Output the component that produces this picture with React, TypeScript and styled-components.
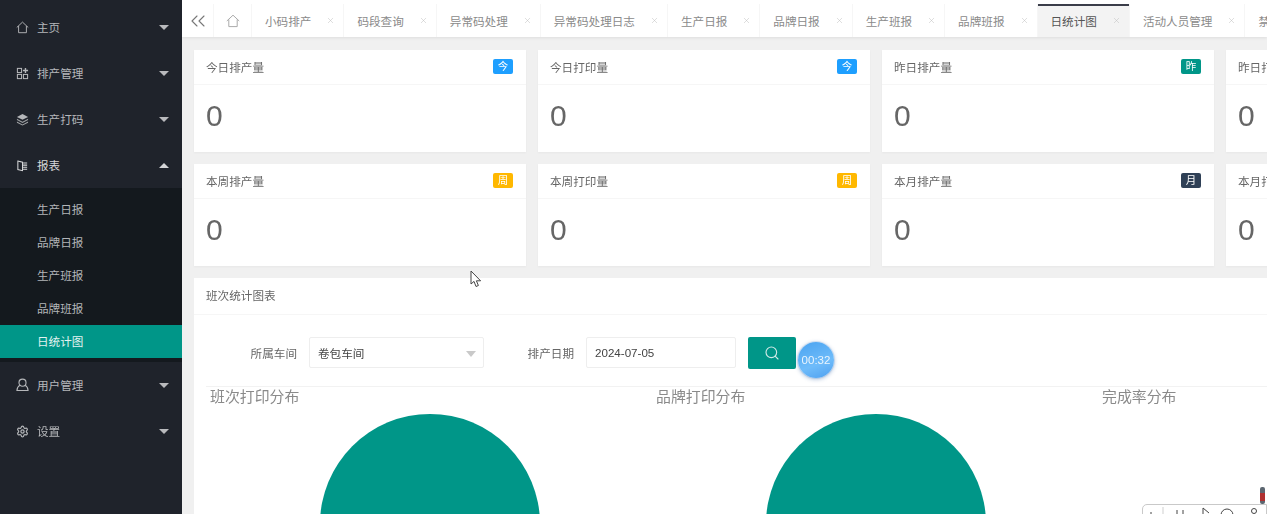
import React from "react";
import styled, { createGlobalStyle } from "styled-components";
import { ChevronsLeft, Settings, X, Search } from "lucide-react";

const Global = createGlobalStyle`
  html, body { margin: 0; padding: 0; height: 100%; overflow: hidden; background: #f0f0f0; }
  #root { height: 100%; }
  * { box-sizing: border-box; }
  body { font-family: "Liberation Sans", "Noto Sans CJK SC", sans-serif; font-size: 11.6px; color: #555; }
`;

const Shell = styled.div`
  position: relative; display: flex; width: 1267px; height: 514px; overflow: hidden;
  filter: blur(0.35px);
`;
const Sidebar = styled.nav`
  flex: 0 0 182px; background: #1f232b; padding-top: 4px; color: #b5b7ba;
  display: flex; flex-direction: column;
`;
const MenuRow = styled.div<{ $open?: boolean }>`
  height: 46px; display: flex; align-items: center; padding: 0 13px 0 16px; gap: 8px;
  color: ${p => (p.$open ? "#d6d7d9" : "#b5b7ba")};
  svg { flex: none; }
  span { flex: 1; }
`;
const Caret = styled.i<{ $up?: boolean }>`
  width: 0; height: 0; border-left: 5.5px solid transparent; border-right: 5.5px solid transparent;
  ${p => (p.$up ? "border-bottom: 5.5px solid #d4d5d7;" : "border-top: 5.5px solid #b9babd;")}
`;
const SubMenu = styled.div`
  background: #14191e; padding: 5px 0 4px; display: flex; flex-direction: column;
`;
const SubItem = styled.div<{ $active?: boolean }>`
  height: 33px; line-height: 33px; padding-left: 37px;
  background: ${p => (p.$active ? "#009688" : "transparent")};
  color: ${p => (p.$active ? "#e3f3f1" : "#b2b5b8")};
`;
const Main = styled.main`
  flex: 1; min-width: 0; display: flex; flex-direction: column; overflow: hidden;
`;
const TabBar = styled.header`
  flex: 0 0 37px; display: flex; background: #fff; padding-top: 4px;
  box-shadow: 0 1px 3px rgba(0,0,0,.08); position: relative;
  white-space: nowrap; color: #888;
`;
const TabIcon = styled.div<{ $w: number; $c: string }>`
  flex: 0 0 ${p => p.$w}px; display: flex; align-items: center; justify-content: center;
  border-right: 1px solid #f6f6f6; color: ${p => p.$c};
`;
const Tab = styled.div<{ $active?: boolean }>`
  flex: none; display: flex; align-items: center; padding: 0 8px 0 13px; gap: 15px;
  border-right: 1px solid #f6f6f6;
  background: ${p => (p.$active ? "#f3f3f3" : "#fff")};
  color: ${p => (p.$active ? "#555" : "#8a8a8a")};
  box-shadow: ${p => (p.$active ? "inset 0 2px 0 #3a3d49" : "none")};
  svg { color: #bdbdbd; flex: none; }
`;
const Content = styled.div`
  flex: 1; padding: 13px 0 0 12px; display: flex; flex-direction: column; gap: 12px; min-height: 0;
`;
const CardGrid = styled.div`
  display: grid; grid-template-columns: repeat(4, 332px); grid-auto-rows: 102px; gap: 12px;
`;
const Card = styled.section`
  background: #fff; box-shadow: 0 1px 2px rgba(0,0,0,.04); display: flex; flex-direction: column;
`;
const CardHead = styled.div`
  height: 35px; display: flex; align-items: center; justify-content: space-between;
  padding: 0 13px 1px 12px; border-bottom: 1px solid #f6f6f6; color: #666;
`;
const Badge = styled.span<{ $c: string }>`
  width: 20px; height: 15px; border-radius: 2px; background: ${p => p.$c}; color: #fff;
  font-size: 10.5px; line-height: 15px; text-align: center;
`;
const Value = styled.div`
  padding: 13px 12px 0; font-size: 30px; line-height: 36px; color: #666;
`;
const Panel = styled.section`
  flex: 1; background: #fff; min-height: 0; width: 1200px; display: flex; flex-direction: column;
`;
const PanelHead = styled.div`
  flex: 0 0 36px; line-height: 36px; padding-left: 12px; border-bottom: 1px solid #f6f6f6; color: #666;
`;
const FilterForm = styled.form`
  margin: 22px 0 0 12px; height: 50px; padding-bottom: 18px; border-bottom: 1px solid #f2f2f2;
  display: flex; align-items: center;
`;
const Label = styled.label<{ $w: number }>`
  flex: 0 0 ${p => p.$w}px; text-align: right; color: #666; white-space: nowrap;
`;
const Field = styled.div<{ $w: number; $gap: number }>`
  position: relative; flex: 0 0 ${p => p.$w}px; height: 31px; margin: 0 ${p => p.$gap}px 0 12px;
  border: 1px solid #eee; border-radius: 2px; display: flex; align-items: center; padding-left: 8px;
  color: #444; font-size: 11.6px;
`;
const SelectArrow = styled.i`
  position: absolute; right: 7px; top: 13px; width: 0; height: 0;
  border-left: 5px solid transparent; border-right: 5px solid transparent; border-top: 6px solid #c9c9c9;
`;
const SearchButton = styled.button`
  flex: 0 0 48px; height: 32px; border: 0; border-radius: 2px; background: #009688; color: #cfe9e6;
  display: flex; align-items: center; justify-content: center; padding: 0;
`;
const Charts = styled.div`
  display: grid; grid-template-columns: repeat(3, 446px); padding-left: 16px;
`;
const ChartCol = styled.div`
  display: flex; flex-direction: column;
`;
const ChartTitle = styled.h3`
  margin: 0; height: 27px; line-height: 21px; font-size: 14.9px; font-weight: 400; color: #8a8a8a;
`;
const PieSvg = styled.svg`
  display: block; margin-left: 110px; flex: none;
`;
const Timer = styled.div`
  position: absolute; left: 798px; top: 342px; width: 36px; height: 36px; border-radius: 50%;
  background: linear-gradient(160deg, #4aa3f0, #6fbcfa 60%, #4d9ff0);
  box-shadow: 0 1px 4px rgba(40,90,160,.45), 0 0 0 1px #e4effb;
  color: #eaf4fd; font-size: 11.5px; line-height: 36px; text-align: center;
`;
const Pointer = styled.svg`
  position: absolute; left: 470px; top: 270px;
`;
const Recorder = styled.div`
  position: absolute; left: 1142px; top: 504px; width: 125px; height: 30px; background: #fff;
  border: 1px solid #c9c9c9; border-radius: 5px 0 0 0;
`;
const RecBar = styled.div`
  position: absolute; left: 1260px; top: 487px; width: 5px; height: 17px; border-radius: 2px;
  background: linear-gradient(#5c6670 0 35%, #b03030 35% 85%, #5c6670 85%);
`;

const HomeGlyph = ({ size }: { size: number }) => (
  <svg width={size} height={size} viewBox="0 0 14 14" fill="none" stroke="currentColor" strokeWidth="1">
    <path d="M.8 7 7 1.2 13.2 7M2.8 5.4V12.6H11.2V5.4" />
  </svg>
);
const QueueIcon = () => (
  <svg width="13" height="13" viewBox="0 0 14 14" fill="none" stroke="currentColor" strokeWidth="1.1">
    <rect x="1.5" y="1.5" width="4.5" height="4.5" />
    <rect x="1.5" y="8" width="4.5" height="4.5" />
    <rect x="8" y="8" width="4.5" height="4.5" />
    <path d="M10.2 1v5.5M7.5 3.7H13" strokeWidth="1.5" />
  </svg>
);
const LayersIcon = () => (
  <svg width="13" height="13" viewBox="0 0 14 14" fill="currentColor">
    <path d="M7 1 13 4.2 7 7.4 1 4.2Z" />
    <path d="M1 6.2 7 9.4 13 6.2V7.6L7 10.8 1 7.6Z" opacity=".85" />
    <path d="M1 9.2 7 12.4 13 9.2V10.4L7 13.4 1 10.4Z" opacity=".85" />
  </svg>
);
const ReportIcon = () => (
  <svg width="13" height="13" viewBox="0 0 14 14" fill="none" stroke="currentColor" strokeWidth="1.1">
    <path d="M2 2.2 7 3.4V12.6L2 11.4Z" />
    <path d="M7.6 4.4H12M7.6 6.6H12M7.6 8.8H12M7.6 11H12" />
  </svg>
);
const UserIcon = () => (
  <svg width="13" height="14" viewBox="0 0 14 15" fill="none" stroke="currentColor" strokeWidth="1.2">
    <circle cx="7" cy="5" r="3.8" />
    <path d="M4.2 7.8C2.4 8.8 1.2 10.6 1 13.4H13C12.8 10.6 11.6 8.8 9.8 7.8" />
  </svg>
);
const RecorderGlyphs = () => (
  <svg width="124" height="10" viewBox="0 0 124 10" fill="none" stroke="#444" strokeWidth="1">
    <path d="M20 1V9" stroke="#cfcfcf" />
    <path d="M8 6V9M34 4V9M40 4V9" />
    <path d="M60 2V9M60 2 66 7" />
    <circle cx="84" cy="9" r="6" />
    <circle cx="111" cy="5" r="2.5" />
  </svg>
);

const tabs = ["小码排产", "码段查询", "异常码处理", "异常码处理日志", "生产日报", "品牌日报", "生产班报", "品牌班报", "日统计图", "活动人员管理", "禁用码管理"];
const cards: [string, string, string][] = [
  ["今日排产量", "今", "#1E9FFF"], ["今日打印量", "今", "#1E9FFF"], ["昨日排产量", "昨", "#009688"], ["昨日打印量", "昨", "#009688"],
  ["本周排产量", "周", "#FFB800"], ["本周打印量", "周", "#FFB800"], ["本月排产量", "月", "#2F4056"], ["本月打印量", "月", "#2F4056"],
];

export default function App() {
  return (
    <Shell>
      <Global />
      <Sidebar>
        <MenuRow><HomeGlyph size={13} /><span>主页</span><Caret /></MenuRow>
        <MenuRow><QueueIcon /><span>排产管理</span><Caret /></MenuRow>
        <MenuRow><LayersIcon /><span>生产打码</span><Caret /></MenuRow>
        <MenuRow $open><ReportIcon /><span>报表</span><Caret $up /></MenuRow>
        <SubMenu>
          <SubItem>生产日报</SubItem>
          <SubItem>品牌日报</SubItem>
          <SubItem>生产班报</SubItem>
          <SubItem>品牌班报</SubItem>
          <SubItem $active>日统计图</SubItem>
        </SubMenu>
        <MenuRow><UserIcon /><span>用户管理</span><Caret /></MenuRow>
        <MenuRow><Settings size={13} strokeWidth={2.2} /><span>设置</span><Caret /></MenuRow>
      </Sidebar>
      <Main>
        <TabBar>
          <TabIcon $w={32} $c="#777"><ChevronsLeft size={24} strokeWidth={1.1} /></TabIcon>
          <TabIcon $w={38} $c="#aaa"><HomeGlyph size={14} /></TabIcon>
          {tabs.map(t => (
            <Tab key={t} $active={t === "日统计图"}>{t}<X size={9} strokeWidth={1.3} /></Tab>
          ))}
        </TabBar>
        <Content>
          <CardGrid>
            {cards.map(([title, badge, color]) => (
              <Card key={title}>
                <CardHead>{title}<Badge $c={color}>{badge}</Badge></CardHead>
                <Value>0</Value>
              </Card>
            ))}
          </CardGrid>
          <Panel>
            <PanelHead>班次统计图表</PanelHead>
            <FilterForm>
              <Label $w={91}>所属车间</Label>
              <Field $w={175} $gap={43}>卷包车间<SelectArrow /></Field>
              <Label $w={47}>排产日期</Label>
              <Field $w={150} $gap={12}>2024-07-05</Field>
              <SearchButton type="button"><Search size={16} strokeWidth={1.7} /></SearchButton>
            </FilterForm>
            <Charts>
              {["班次打印分布", "品牌打印分布", "完成率分布"].map((t, i) => (
                <ChartCol key={t}>
                  <ChartTitle>{t}</ChartTitle>
                  {i < 2 && (
                    <PieSvg width="220" height="220" viewBox="0 0 220 220">
                      <circle cx="110" cy="110" r="110" fill="#009688" />
                    </PieSvg>
                  )}
                </ChartCol>
              ))}
            </Charts>
          </Panel>
        </Content>
      </Main>
      <Pointer width="13" height="18" viewBox="0 0 13 18" fill="#fff" stroke="#444" strokeWidth="1">
        <path d="M1 1V14L4 11.4 6 16.5 8.4 15.5 6.4 10.8H10.6Z" />
      </Pointer>
      <Timer>00:32</Timer>
      <RecBar />
      <Recorder><RecorderGlyphs /></Recorder>
    </Shell>
  );
}
